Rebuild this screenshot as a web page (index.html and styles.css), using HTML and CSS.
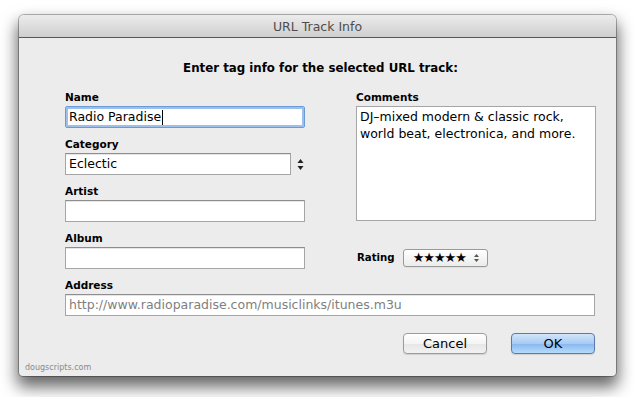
FILE: index.html
```html
<!DOCTYPE html>
<html>
<head>
<meta charset="utf-8">
<title>URL Track Info</title>
<link rel="stylesheet" href="styles.css">
</head>
<body>
<div class="stage">
<div class="window">
  <div class="titlebar">URL Track Info</div>
  <div class="content">
    <h1 class="heading">Enter tag info for the selected URL track:</h1>
    <div class="columns">
      <div class="col">
        <div class="field">
          <div class="label">Name</div>
          <div class="input focused"><span class="val">Radio Paradise</span><span class="caret"></span></div>
        </div>
        <div class="field">
          <div class="label">Category</div>
          <div class="combo">
            <div class="input short"><span class="val">Eclectic</span></div>
            <svg class="stepper" width="7" height="11" viewBox="0 0 7 11"><path d="M3.5 0 L6.5 4 L0.5 4 Z" fill="#222"/><path d="M3.5 11 L6.5 7 L0.5 7 Z" fill="#222"/></svg>
          </div>
        </div>
        <div class="field">
          <div class="label">Artist</div>
          <div class="input"></div>
        </div>
        <div class="field">
          <div class="label">Album</div>
          <div class="input"></div>
        </div>
      </div>
      <div class="col">
        <div class="field">
          <div class="label">Comments</div>
          <div class="textarea">DJ–mixed modern &amp; classic rock, world beat, electronica, and more.</div>
        </div>
        <div class="rating-row">
          <span class="label inline">Rating</span>
          <div class="popup">
            <span class="stars">★★★★★</span>
            <svg class="mini-stepper" width="5" height="8" viewBox="0 0 5 8"><path d="M2.5 0 L5 3 L0 3 Z" fill="#555"/><path d="M2.5 8 L5 5 L0 5 Z" fill="#555"/></svg>
          </div>
        </div>
      </div>
    </div>
    <div class="field">
      <div class="label">Address</div>
      <div class="input wide"><span class="val muted">http://www.radioparadise.com/musiclinks/itunes.m3u</span></div>
    </div>
    <div class="buttons">
      <div class="button">Cancel</div>
      <div class="button default">OK</div>
    </div>
  </div>
  <div class="credit">dougscripts.com</div>
</div>
</div>
</body>
</html>
```

FILE: styles.css
```css
* { box-sizing: border-box; }
html, body { margin: 0; padding: 0; background: #ffffff; }
body { font-family: "DejaVu Sans", "Liberation Sans", sans-serif; color: #000; }

.stage {
  width: 635px;
  height: 397px;
  padding: 15px 19px 21px 19px;
  background: #ffffff;
}

.window {
  position: relative;
  width: 597px;
  height: 361px;
  background: #ececec;
  border-radius: 5px 5px 4px 4px;
  box-shadow: 0 0 0 1px rgba(0,0,0,0.28), 0 9px 16px 2px rgba(0,0,0,0.6);
  overflow: hidden;
}

.titlebar {
  height: 23px;
  border-bottom: 1px solid #575757;
  background: linear-gradient(#ececec, #cfcfcf);
  color: #4d4d4d;
  font-size: 12.5px;
  line-height: 23px;
  text-align: center;
}

.content {
  padding: 0 20px 0 46px;
}

.heading {
  margin: 22px -20px 14px -40px;
  font-size: 11.8px;
  font-weight: bold;
  line-height: 16px;
  text-align: center;
}

.columns {
  display: flex;
  gap: 51px;
}
.col { width: 240px; display: flex; flex-direction: column; }

.field { margin-bottom: 9px; }
.label {
  font-size: 10.5px;
  font-weight: bold;
  line-height: 14px;
  height: 14px;
  margin-bottom: 2px;
}
.label.inline { margin: 0; display: inline-block; font-size: 10.2px; }

.input {
  height: 22px;
  width: 240px;
  background: #fff;
  border: 1px solid #a5a5a5;
  border-top-color: #8e8e8e;
  box-shadow: inset 0 1px 0 #e6e6e6;
  font-size: 12.5px;
  line-height: 20px;
  padding: 0 3px;
  white-space: nowrap;
  overflow: hidden;
  display: flex;
  align-items: center;
}
.input.focused {
  border: 1px solid #6b9bd6;
  box-shadow: inset 0 0 0 2px #9dbfeb;
  border-radius: 2px;
}
.input.short { width: 226px; }
.input.wide { width: 530px; }
.val.muted { color: #808080; }
.caret { width: 1px; height: 15px; background: #000; margin-left: 1px; }

.combo { display: flex; align-items: center; gap: 6px; }

.textarea {
  width: 240px;
  height: 115px;
  background: #fff;
  border: 1px solid #a5a5a5;
  font-size: 12.5px;
  line-height: 17px;
  padding: 1px 3px;
}

.rating-row {
  margin-top: 19px;
  display: flex;
  align-items: center;
  gap: 8px;
  padding-left: 1px;
}
.popup {
  width: 85px;
  height: 18px;
  border: 1px solid #9a9a9a;
  border-radius: 3px;
  background: linear-gradient(#ffffff, #ececec);
  box-shadow: 0 1px 0 rgba(0,0,0,0.05);
  display: flex;
  align-items: center;
  padding: 0 8px 0 9px;
}
.stars { font-size: 13px; letter-spacing: -1px; flex: 1; line-height: 16px; }

.buttons {
  display: flex;
  justify-content: flex-end;
  gap: 24px;
  margin-top: 17px;
  padding-right: 1px;
}
.button {
  width: 84px;
  height: 21px;
  border: 1px solid #9c9c9c;
  border-radius: 4px;
  background: linear-gradient(#ffffff, #f4f4f4 50%, #e6e6e6 51%, #f2f2f2);
  box-shadow: 0 1px 1px rgba(0,0,0,0.12);
  font-size: 13px;
  line-height: 19px;
  text-align: center;
}
.button.default {
  border-color: #5a7aae;
  background: linear-gradient(#d2e5fa, #a7cbf3 50%, #86b7ef 51%, #b8dbfb);
}

.credit {
  position: absolute;
  left: 6px;
  bottom: 4px;
  font-size: 8px;
  color: #8a8a8a;
}
```
